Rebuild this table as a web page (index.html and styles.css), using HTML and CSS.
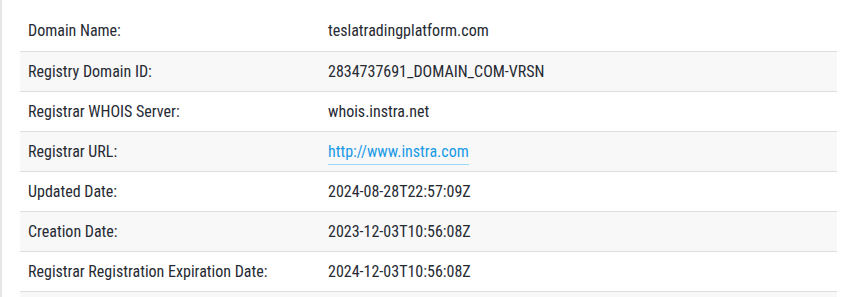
FILE: index.html
```html
<!DOCTYPE html>
<html>
<head>
<meta charset="utf-8">
<link rel="stylesheet" href="styles.css">
</head>
<body>
<div class="panel">
  <table class="whois">
    <tr><td class="k">Domain Name:</td><td class="v">teslatradingplatform.com</td></tr>
    <tr><td class="k">Registry Domain ID:</td><td class="v">2834737691_DOMAIN_COM-VRSN</td></tr>
    <tr><td class="k">Registrar WHOIS Server:</td><td class="v">whois.instra.net</td></tr>
    <tr><td class="k">Registrar URL:</td><td class="v"><a href="#" class="link">http://www.instra.com</a></td></tr>
    <tr><td class="k">Updated Date:</td><td class="v">2024-08-28T22:57:09Z</td></tr>
    <tr><td class="k">Creation Date:</td><td class="v">2023-12-03T10:56:08Z</td></tr>
    <tr><td class="k">Registrar Registration Expiration Date:</td><td class="v">2024-12-03T10:56:08Z</td></tr>
    <tr class="last"><td class="k"></td><td class="v"></td></tr>
  </table>
</div>
</body>
</html>
```
FILE: styles.css
```css
html, body {
  margin: 0;
  padding: 0;
  background: #fff;
}
.panel {
  border-left: 2px solid #e6e6e6;
  padding: 11px 0 0 18px;
  height: 297px;
  box-sizing: border-box;
  overflow: hidden;
}
.whois {
  width: 817px;
  border-collapse: collapse;
  font-family: "Roboto Condensed", Roboto, "Liberation Sans", sans-serif;
  font-stretch: condensed;
  font-size: 16px;
  color: #262a33;
}
.whois tr {
  border-bottom: 1px solid #dedede;
}
.whois tr:nth-child(even) {
  background: #f8f8f8;
}
.whois td {
  height: 40px;
  padding: 0 8px;
  box-sizing: border-box;
  vertical-align: middle;
}
.whois td.k {
  width: 300px;
}
.link {
  color: #1a9ae6;
  text-decoration: none;
  border-bottom: 1px solid #9ad8f8;
  padding-bottom: 3px;
}
```
